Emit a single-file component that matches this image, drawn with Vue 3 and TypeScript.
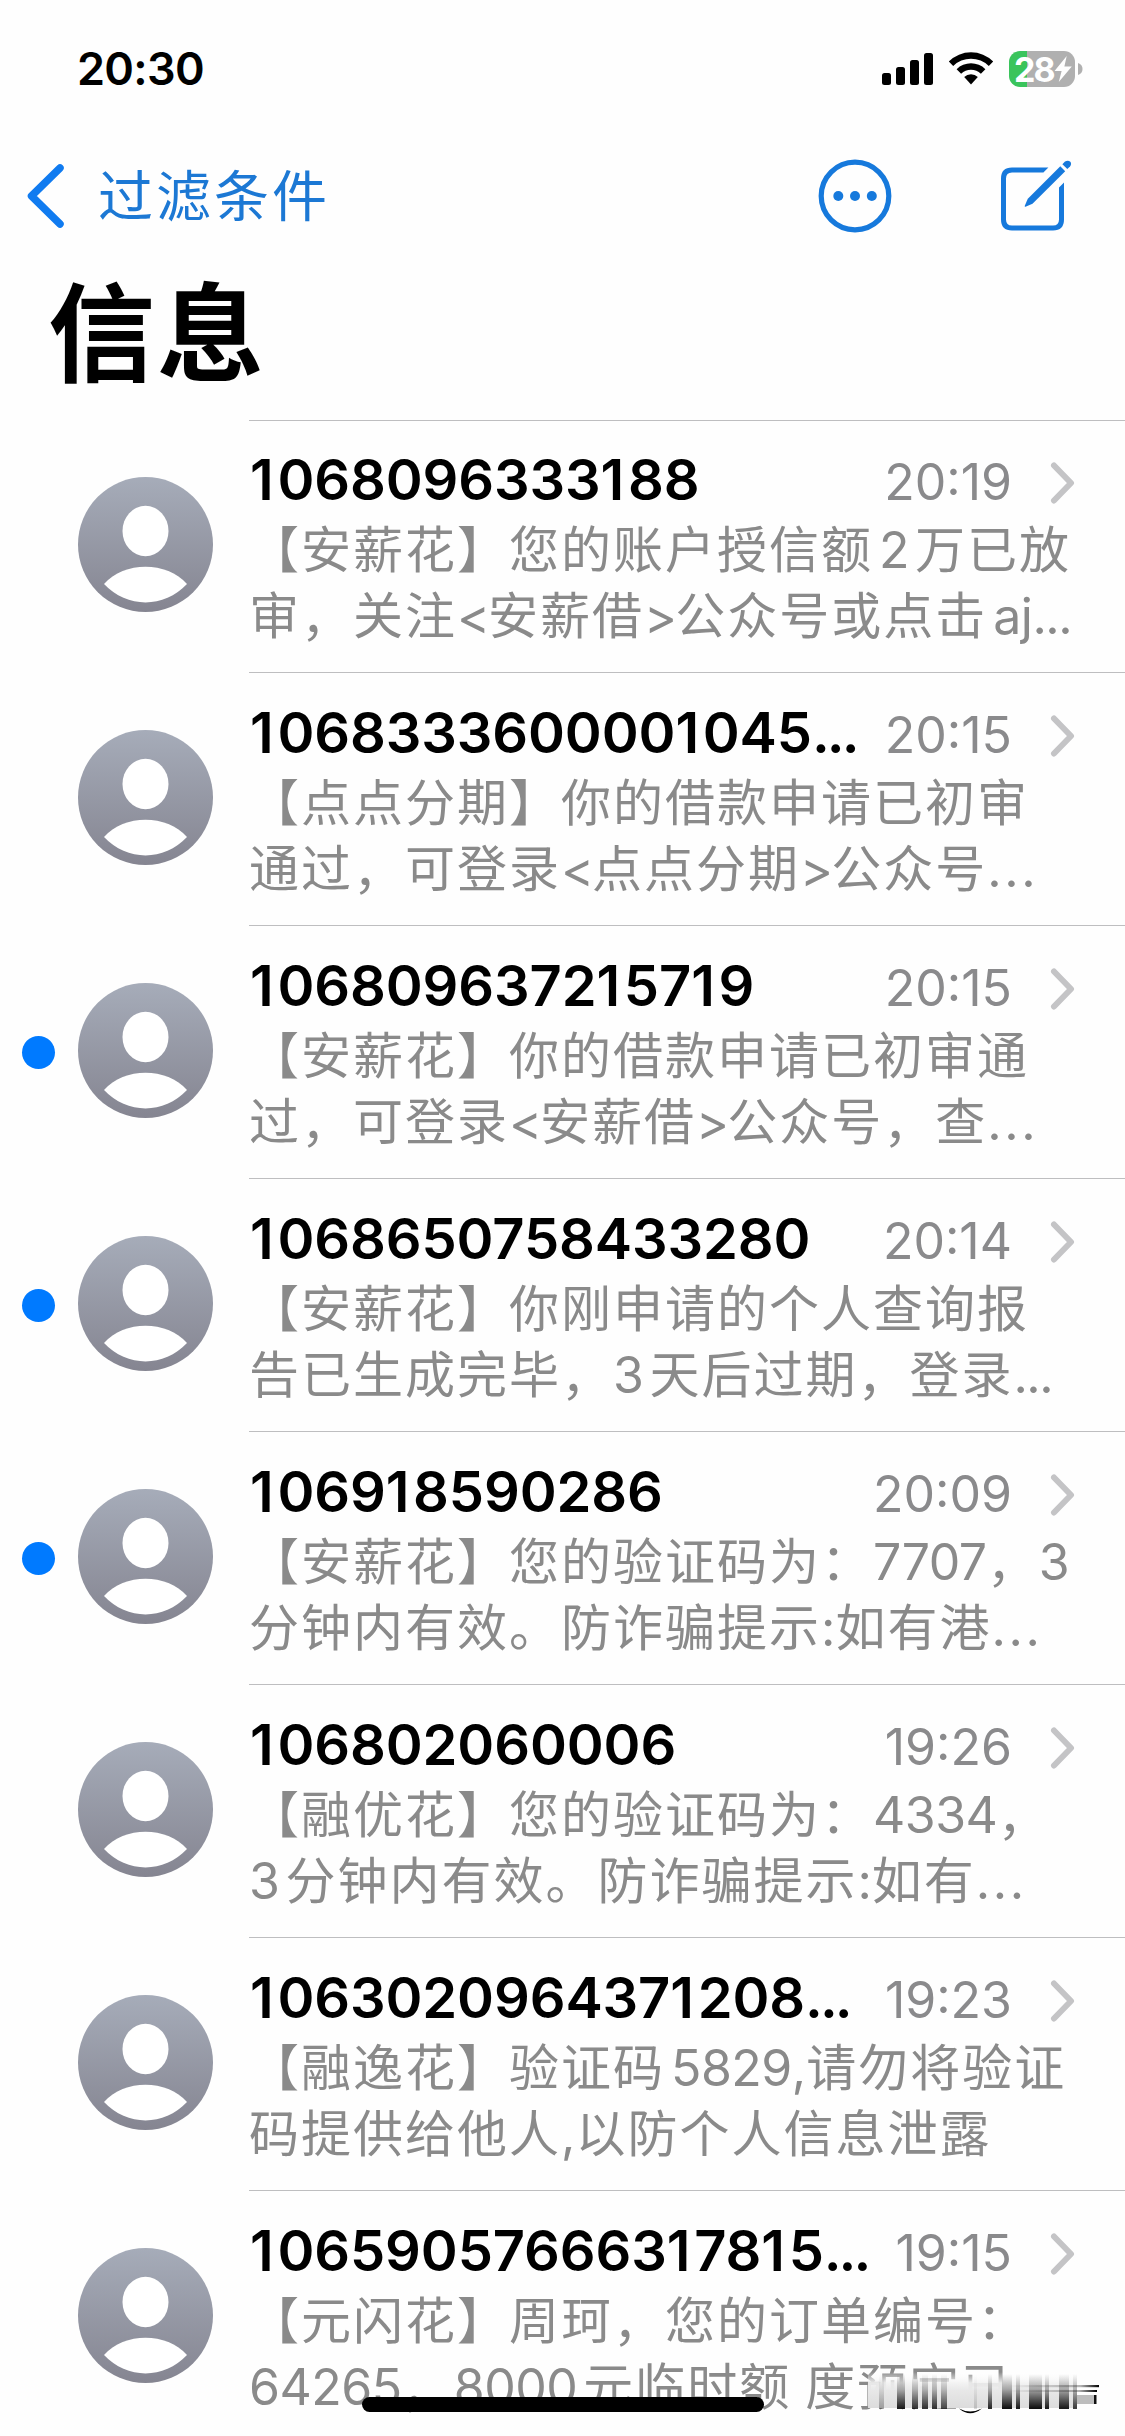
<script setup lang="ts">
interface Message {
  sender: string
  time: string
  unread?: boolean
  lines: [string, string]
  wideDots?: boolean
}

interface Run {
  text: string
  kind: string
}

const messages: Message[] = [
  { sender: '1068096333188', time: '20:19', lines: ['【安薪花】您的账户授信额2万已放', '审，关注<安薪借>公众号或点击aj...'] },
  { sender: '1068333600001045...', time: '20:15', lines: ['【点点分期】你的借款申请已初审', '通过，可登录<点点分期>公众号...'], wideDots: true },
  { sender: '106809637215719', time: '20:15', unread: true, lines: ['【安薪花】你的借款申请已初审通', '过，可登录<安薪借>公众号，查...'], wideDots: true },
  { sender: '1068650758433280', time: '20:14', unread: true, lines: ['【安薪花】你刚申请的个人查询报', '告已生成完毕，3天后过期，登录...'] },
  { sender: '106918590286', time: '20:09', unread: true, lines: ['【安薪花】您的验证码为：7707，3', '分钟内有效。防诈骗提示:如有港...'], wideDots: true },
  { sender: '106802060006', time: '19:26', lines: ['【融优花】您的验证码为：4334，', '3分钟内有效。防诈骗提示:如有...'], wideDots: true },
  { sender: '1063020964371208...', time: '19:23', lines: ['【融逸花】验证码5829,请勿将验证', '码提供给他人,以防个人信息泄露'] },
  { sender: '10659057666317815...', time: '19:15', lines: ['【元闪花】周珂，您的订单编号：', '64265，8000元临时额 度预定已'] },
]

// Splits a preview line into Han, Latin and ellipsis runs, which are spaced differently.
function runs(line: string, wideDots?: boolean): Run[] {
  const parts = line.match(/\.{3}|[A-Za-z0-9]+|[\x20-\x7e]|，|[^\x00-\x7f，]+/g) ?? []
  return parts.map((text, i) => {
    if (text === '...') return { text, kind: wideDots ? 'dots wide' : 'dots' }
    if (/^[A-Za-z0-9]/.test(text)) {
      const prev = parts[i - 1] ?? ''
      const next = parts[i + 1] ?? ''
      let kind = 'latin'
      if (/[\u4e00-\u9fff]$/.test(prev)) kind += ' gap-before'
      if (/^[\u4e00-\u9fff]/.test(next)) kind += ' gap-after'
      return { text, kind }
    }
    if (text === ' ') return { text, kind: 'space' }
    if (text === '，') return { text, kind: 'han comma' }
    if (text === '<' || text === '>') return { text, kind: 'angle' }
    return { text, kind: /^[\x21-\x7e]$/.test(text) ? 'mark' : 'han' }
  })
}

// The narrow digit 1 gets a little more room than the others.
function senderRuns(sender: string): Run[] {
  const parts = sender.match(/1|[02-9]+|\.{3}/g) ?? []
  return parts.map((text) => ({ text, kind: text === '1' ? 'one' : text === '...' ? 'name-dots' : 'digits' }))
}

const smearBars: [number, number, number][] = [
  [11, 5, 0.3], [29, 8, 0.9], [44, 6, 0.8], [54, 6, 0.8], [64, 5, 0.8], [73, 6, 0.7],
  [106, 3, 0.15], [120, 4, 0.85], [134, 10, 0.95], [148, 4, 0.9], [161, 13, 0.95],
  [177, 4, 0.9], [191, 10, 0.9], [205, 4, 0.75],
]
</script>

<template>
  <main class="screen">
    <header class="status">
      <span class="clock">20:30</span>
      <div class="indicators">
        <svg class="signal" width="51" height="36" viewBox="0 0 51 36">
          <rect x="0" y="22" width="9" height="12" rx="2.5" />
          <rect x="14" y="16" width="9" height="18" rx="2.5" />
          <rect x="28" y="9" width="9" height="25" rx="2.5" />
          <rect x="42" y="2" width="9" height="32" rx="2.5" />
        </svg>
        <svg class="wifi" width="46" height="36" viewBox="0 0 46 36">
          <path d="M0.8 10.5A31.5 31.5 0 0 1 45.2 10.5L40.8 15A25.3 25.3 0 0 0 5.2 15Z" />
          <path d="M8.6 18.2A20.6 20.6 0 0 1 37.4 18.2L32.9 22.7A14.3 14.3 0 0 0 13.1 22.7Z" />
          <path d="M16.2 25.9A9.8 9.8 0 0 1 29.8 25.9L23 33.5Z" />
        </svg>
        <div class="battery">
          <div class="cell">
            <span>28</span>
            <svg width="18" height="26" viewBox="0 0 17 25" preserveAspectRatio="none"><path d="M12 0L0.500 14.500H7.200L4.500 25L16.800 10H9.800Z" fill="#fff" /></svg>
          </div>
          <svg width="5" height="12" viewBox="0 0 5 12"><path d="M0 0Q4.5 1.5 4.5 6T0 12Z" fill="#b0b0b0" /></svg>
        </div>
      </div>
    </header>

    <nav class="nav">
      <svg class="back" width="40" height="68" viewBox="0 0 40 68"><path d="M34 6L5.5 34L34 62" /></svg>
      <span class="back-label">过滤条件</span>
      <svg class="more" width="74" height="74" viewBox="0 0 74 74">
        <circle cx="37" cy="37" r="33.8" fill="none" stroke="#1679dc" stroke-width="5.2" />
        <g fill="#1679dc"><circle cx="20.3" cy="37" r="5" /><circle cx="37" cy="37" r="5" /><circle cx="53.8" cy="37" r="5" /></g>
      </svg>
      <svg class="compose" width="74" height="74" viewBox="0 0 74 74">
        <path d="M49.4 8.500H13Q2 8.500 2 19.500V60.500Q2 71.500 13 71.500H54Q65 71.500 65 60.500V23.600L60 28.600V60.500Q60 66.500 54 66.500H13Q7 66.500 7 60.500V19.500Q7 13.500 13 13.500H44.400Z" />
        <path d="M61.3 7.3L66.2 12.2L33.5 44.7L26.5 47.8Q25.4 48 25.8 46.8L28.8 39.8Z" />
        <path d="M63.4 5.2L66 2.6Q69 0.6 71.3 2.8Q73 5 71 7.4L68.3 10.1Z" />
      </svg>
    </nav>

    <h1 class="title">信息</h1>

    <ul class="list">
      <li v-for="m in messages" :key="m.sender" class="row">
        <div class="lead"><i v-if="m.unread" class="dot"></i></div>
        <svg class="avatar" width="135" height="135" viewBox="0 0 135 135">
          <defs>
            <linearGradient id="avatar-fill" x1="0" y1="0" x2="0" y2="1">
              <stop offset="0" stop-color="#a6acb9" />
              <stop offset="1" stop-color="#858591" />
            </linearGradient>
          </defs>
          <circle cx="67.5" cy="67.5" r="67.5" fill="url(#avatar-fill)" />
          <ellipse cx="67.5" cy="54" rx="23" ry="25.2" fill="#fff" />
          <path d="M26 107C46 84 89 84 109 107C86 131.500 49 131.500 26 107Z" fill="#fff" />
        </svg>
        <div class="body">
          <div class="head">
            <span class="sender"><span v-for="(r, j) in senderRuns(m.sender)" :key="j" :class="r.kind">{{ r.text }}</span></span>
            <span class="time">{{ m.time }}</span>
            <svg class="chevron" width="25" height="42" viewBox="0 0 25 42"><path d="M4 3.500L21 21L4 38.500" /></svg>
          </div>
          <p v-for="(line, i) in m.lines" :key="i" class="line"><span v-for="(r, j) in runs(line, m.wideDots)" :key="j" :class="r.kind">{{ r.text }}</span></p>
        </div>
      </li>
    </ul>

    <svg class="smear" width="234" height="44" viewBox="0 0 234 44">
      <defs>
        <linearGradient id="haze" x1="0" y1="0" x2="0" y2="1">
          <stop offset="0" stop-color="#fff" stop-opacity="0" />
          <stop offset="0.3" stop-color="#f2f2f2" stop-opacity="0.9" />
          <stop offset="0.5" stop-color="#e8e8e8" />
          <stop offset="1" stop-color="#dcdcdc" />
        </linearGradient>
        <linearGradient id="bar" x1="0" y1="0" x2="0" y2="1">
          <stop offset="0" stop-color="#000" stop-opacity="0" />
          <stop offset="0.45" stop-color="#000" stop-opacity="0.32" />
          <stop offset="1" stop-color="#000" />
        </linearGradient>
        <linearGradient id="streak" x1="0" y1="0" x2="1" y2="0">
          <stop offset="0" stop-color="#000" stop-opacity="0" />
          <stop offset="0.8" stop-color="#000" stop-opacity="0.3" />
          <stop offset="1" stop-color="#000" />
        </linearGradient>
      </defs>
      <rect x="0" y="0" width="209" height="36" fill="url(#haze)" />
      <rect v-for="b in smearBars" :key="b[0]" :x="b[0]" y="2" :width="b[1]" height="35" :opacity="b[2]" fill="url(#bar)" />
      <rect x="140" y="13" width="91" height="2.200" fill="url(#streak)" />
      <rect x="140" y="18" width="89" height="2" fill="url(#streak)" />
      <rect x="209" y="23" width="18" height="9" fill="#bdbdbd" />
      <rect x="226" y="23" width="2.500" height="9" fill="#111" />
      <path d="M91 36.500Q102 46 114 36.500Q102 42.500 91 36.500Z" />
    </svg>
    <div class="home"></div>
  </main>
</template>

<style>
body {
  background: #fff;
}
</style>

<style scoped>
.screen {
  position: relative;
  box-sizing: border-box;
  width: 1125px;
  height: 2436px;
  overflow: hidden;
  background: #fefefe;
  color: #000;
  font-family: Inter, "Noto Sans CJK SC", sans-serif;
  text-spacing-trim: space-all;
}

.status {
  display: flex;
  justify-content: space-between;
  box-sizing: border-box;
  height: 130px;
  padding: 40px 42px 0 77px;
}

.clock {
  font-size: 45px;
  line-height: 58px;
  font-weight: 600;
  letter-spacing: -0.7px;
}

.indicators {
  display: flex;
  align-items: flex-start;
  padding-top: 11px;
}

.wifi {
  margin: 0 15px;
}

.battery {
  display: flex;
  align-items: center;
  gap: 3px;
}

.cell {
  display: flex;
  align-items: center;
  box-sizing: border-box;
  width: 66px;
  height: 36px;
  padding-left: 5px;
  border-radius: 11px;
  background: linear-gradient(90deg, #3ac45c 18px, #b0b0b0 18px);
  color: #fff;
  font-size: 34px;
  font-weight: 700;
  letter-spacing: -2px;
}

.nav {
  display: flex;
  align-items: center;
  height: 132px;
  padding: 0 52px 0 26px;
}

.back path {
  fill: none;
  stroke: #107bf0;
  stroke-width: 7.5;
  stroke-linecap: round;
  stroke-linejoin: round;
}

.back-label {
  flex: 1;
  margin: 0 0 9px 32px;
  color: #1c78d4;
  font-size: 55px;
  letter-spacing: 3px;
}

.compose {
  margin-left: 107px;
  fill: #1679dc;
}

.title {
  height: 157px;
  margin: 0;
  padding-left: 48px;
  font-size: 107px;
  line-height: 144px;
  font-weight: 700;
  letter-spacing: 2px;
}

.list {
  margin: 0;
  padding: 0;
  list-style: none;
}

.row {
  display: flex;
  height: 253px;
}

.lead {
  width: 78px;
}

.dot {
  display: block;
  width: 33px;
  height: 33px;
  margin: 111px 0 0 22px;
  border-radius: 50%;
  background: #007aff;
}

.avatar {
  margin: 58px 36px 0 0;
}

.body {
  flex: 1;
  box-sizing: border-box;
  padding-top: 27px;
  border-top: 1px solid #bebec0;
}

.row:first-child .body {
  margin-top: 1px;
  padding-top: 26px;
}

.head {
  display: flex;
  align-items: baseline;
  height: 70px;
  line-height: 66px;
}

.sender {
  padding-left: 1px;
  font-size: 56px;
  font-weight: 600;
  white-space: nowrap;
}

.digits {
  letter-spacing: -0.1px;
}

.one {
  letter-spacing: 3.7px;
}

.name-dots {
  letter-spacing: -3px;
}

.time {
  margin-left: auto;
  color: #8a8a8c;
  font-size: 50px;
}

.chevron {
  align-self: flex-start;
  margin: 15px 50px 0 38px;
}

.chevron path {
  fill: none;
  stroke: #c4c4c6;
  stroke-width: 6;
  stroke-linecap: round;
  stroke-linejoin: round;
}

.line {
  height: 66px;
  margin: 0;
  color: #8a8a8a;
  font-size: 50px;
  line-height: 66px;
  white-space: pre;
}

.han {
  letter-spacing: 2px;
}

.comma {
  position: relative;
  top: 2px;
}

.latin {
  letter-spacing: -0.5px;
}

.angle {
  letter-spacing: -2px;
}

.dots {
  letter-spacing: -1.5px;
}

.gap-before {
  margin-left: 6px;
}

.gap-after {
  margin-right: 6px;
}

.wide {
  letter-spacing: 2.6px;
}

.smear {
  position: absolute;
  left: 868px;
  top: 2372px;
}

.home {
  position: absolute;
  left: 362px;
  top: 2397px;
  width: 402px;
  height: 15px;
  border-radius: 8px;
  background: #000;
}
</style>
